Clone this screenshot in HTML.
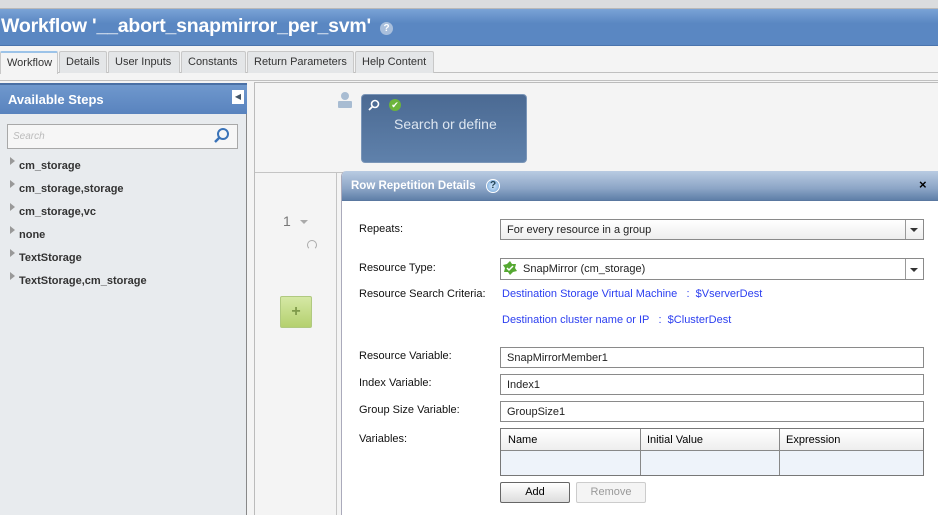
<!DOCTYPE html>
<html><head><style>
*{box-sizing:border-box;margin:0;padding:0}
body{width:938px;height:515px;overflow:hidden;background:#f4f4f4;font-family:"Liberation Sans",Tahoma,sans-serif;position:relative;font-size:12px;color:#000}
.abs{position:absolute}
.tab{position:absolute;top:51px;height:22px;border:1px solid #c8c8c8;border-bottom:none;background:#e4e6e8;font-size:11px;color:#333;padding:4px 6px 0;border-radius:2px 2px 0 0}
.lbl{position:absolute;left:359px;font-size:11px;color:#111}
.inp{position:absolute;left:500px;width:424px;height:21px;border:1px solid #8a8a8a;background:#fff;font-size:11px;padding:4px 6px;color:#222}
.tree{position:absolute;left:19px;font-size:11px;font-weight:bold;color:#333}
.tri{position:absolute;left:10px;width:0;height:0;border-left:5px solid #999;border-top:4px solid transparent;border-bottom:4px solid transparent}
.link{position:absolute;font-size:11px;color:#2b3ef0}
</style></head><body>
<div class="abs" style="left:0;top:0;width:938px;height:9px;background:#dadcde;border-bottom:1px solid #b8b8b8"></div>
<div class="abs" style="left:0;top:9px;width:938px;height:37px;background:linear-gradient(#7aa3d6,#5a87c2 40%,#5a87c2);border-bottom:1px solid #4a74ad"></div>
<div class="abs" style="left:1px;top:15px;font-size:19.5px;font-weight:bold;color:#fff;letter-spacing:-0.2px">Workflow '__abort_snapmirror_per_svm'</div>
<div class="abs" style="left:380px;top:22px;width:13px;height:13px;border-radius:50%;background:#a9bfdc;color:#fff;font-size:10px;font-weight:bold;text-align:center;line-height:13px">?</div>
<div class="abs" style="left:0;top:72px;width:938px;height:1px;background:#c0c0c0"></div>
<div class="tab" style="left:0;width:58px;background:#f4f4f4;height:23px;border-top:2px solid #9cc3e8">Workflow</div>
<div class="tab" style="left:59px;width:48px">Details</div>
<div class="tab" style="left:108px;width:72px">User Inputs</div>
<div class="tab" style="left:181px;width:65px">Constants</div>
<div class="tab" style="left:247px;width:107px">Return Parameters</div>
<div class="tab" style="left:355px;width:79px">Help Content</div>
<div class="abs" style="left:0;top:80px;width:938px;height:1px;background:#c0c0c0"></div>
<!-- left panel -->
<div class="abs" style="left:0;top:83px;width:247px;height:432px;background:#e8ebee;border-right:1px solid #888"></div>
<div class="abs" style="left:0;top:83px;width:247px;height:31px;background:linear-gradient(#6f98cd,#5983be);border-top:2px solid #4a70a5"></div>
<div class="abs" style="left:8px;top:92px;font-size:13px;font-weight:bold;color:#fff">Available Steps</div>
<div class="abs" style="left:232px;top:90px;width:12px;height:14px;background:#fff;color:#456;font-size:8px;text-align:center;line-height:14px">◀</div>
<div class="abs" style="left:7px;top:124px;width:231px;height:25px;border:1px solid #a8a8a8;background:#f6f6f6"></div>
<div class="abs" style="left:13px;top:131px;font-size:10px;font-style:italic;color:#bbb">Search</div>
<svg class="abs" style="left:213px;top:127px" width="18" height="18"><circle cx="10" cy="7" r="5" fill="none" stroke="#3a73b8" stroke-width="2"/><line x1="6.5" y1="10.5" x2="2" y2="15" stroke="#3a73b8" stroke-width="2.5"/></svg>
<div class="tri" style="top:157px"></div><div class="tree" style="top:160px">cm_storage</div>
<div class="tri" style="top:180px"></div><div class="tree" style="top:183px">cm_storage,storage</div>
<div class="tri" style="top:203px"></div><div class="tree" style="top:206px">cm_storage,vc</div>
<div class="tri" style="top:226px"></div><div class="tree" style="top:229px">none</div>
<div class="tri" style="top:249px"></div><div class="tree" style="top:252px">TextStorage</div>
<div class="tri" style="top:272px"></div><div class="tree" style="top:275px">TextStorage,cm_storage</div>
<!-- canvas -->
<div class="abs" style="left:254px;top:82px;width:684px;height:433px;background:#f4f4f4;border-left:1px solid #bbb;border-top:1px solid #bbb"></div>
<div class="abs" style="left:255px;top:172px;width:683px;height:1px;background:#c4c4c4"></div>
<div class="abs" style="left:336px;top:173px;width:1px;height:342px;background:#c4c4c4"></div>
<svg class="abs" style="left:337px;top:91px" width="16" height="18"><circle cx="8" cy="5" r="4" fill="#a8bcd2"/><rect x="1" y="10" width="14" height="7" rx="1" fill="#a8bcd2"/></svg>
<div class="abs" style="left:361px;top:94px;width:166px;height:69px;border-radius:4px;background:linear-gradient(#4b6a93,#5f81ab);border:1px solid #7b96b8"></div>
<svg class="abs" style="left:367px;top:99px" width="14" height="14"><circle cx="8" cy="5" r="3.5" fill="none" stroke="#fff" stroke-width="1.6"/><line x1="5.5" y1="7.5" x2="2" y2="11" stroke="#fff" stroke-width="1.8"/></svg>
<div class="abs" style="left:389px;top:99px;width:12px;height:12px;border-radius:50%;background:#6cb43c;color:#fff;font-size:9px;text-align:center;line-height:12px">✔</div>
<div class="abs" style="left:394px;top:116px;font-size:14px;color:#dde6f0">Search or define</div>
<div class="abs" style="left:283px;top:213px;font-size:14px;color:#777">1</div>
<div class="abs" style="left:300px;top:220px;border-top:4px solid #aaa;border-left:4px solid transparent;border-right:4px solid transparent"></div>
<div class="abs" style="left:307px;top:240px;width:10px;height:10px;border:1.5px solid #aaa;border-radius:50%;border-bottom-color:transparent"></div>
<div class="abs" style="left:280px;top:296px;width:32px;height:32px;background:linear-gradient(#d5e8a5,#b4d06e);border:1px solid #b0c980;border-radius:2px;color:#7f9a4a;font-size:16px;text-align:center;line-height:30px;font-weight:bold">+</div>
<!-- dialog -->
<div class="abs" style="left:341px;top:171px;width:597px;height:344px;background:#fff;border-left:1px solid #aab;border-radius:5px 0 0 0;overflow:hidden">
<div style="height:30px;background:linear-gradient(#b9cbe2,#8ca5c6 60%,#5f7fa8);border-bottom:1px solid #5a78a0"></div>
</div>
<div class="abs" style="left:351px;top:180px;font-size:11.5px;font-weight:bold;color:#fff">Row Repetition Details</div>
<div class="abs" style="left:486px;top:179px;width:14px;height:14px;border-radius:50%;background:radial-gradient(#d8ecff,#6a9fd4);border:1px solid #fff;color:#245;font-size:10px;font-weight:bold;text-align:center;line-height:12px">?</div>
<div class="abs" style="left:919px;top:177px;font-size:13px;font-weight:bold;color:#000">×</div>
<div class="lbl" style="top:223px">Repeats:</div>
<div class="inp" style="top:219px;height:21px;background:linear-gradient(#fff,#eee)">For every resource in a group</div>
<div class="abs" style="left:905px;top:220px;width:18px;height:19px;border-left:1px solid #999"></div>
<div class="abs" style="left:910px;top:228px;border-top:4px solid #333;border-left:4px solid transparent;border-right:4px solid transparent"></div>
<div class="lbl" style="top:262px">Resource Type:</div>
<div class="inp" style="top:258px;height:22px;padding-left:22px">SnapMirror (cm_storage)</div>
<svg class="abs" style="left:503px;top:261px" width="14" height="14"><polygon points="7,0 9,3 13,3 12,7 14,10 10,11 7,14 5,11 1,11 2,7 0,4 4,3" fill="#55a832"/><path d="M4 7l2 2 4-4" stroke="#fff" stroke-width="1.5" fill="none"/></svg>
<div class="abs" style="left:905px;top:259px;width:18px;height:20px;border-left:1px solid #999"></div>
<div class="abs" style="left:910px;top:268px;border-top:4px solid #333;border-left:4px solid transparent;border-right:4px solid transparent"></div>
<div class="lbl" style="top:288px">Resource Search Criteria:</div>
<div class="link" style="left:502px;top:288px">Destination Storage Virtual Machine&nbsp;&nbsp;&nbsp;:&nbsp;&nbsp;$VserverDest</div>
<div class="link" style="left:502px;top:314px">Destination cluster name or IP&nbsp;&nbsp;&nbsp;:&nbsp;&nbsp;$ClusterDest</div>
<div class="lbl" style="top:350px">Resource Variable:</div>
<div class="inp" style="top:347px">SnapMirrorMember1</div>
<div class="lbl" style="top:377px">Index Variable:</div>
<div class="inp" style="top:374px">Index1</div>
<div class="lbl" style="top:404px">Group Size Variable:</div>
<div class="inp" style="top:401px">GroupSize1</div>
<div class="lbl" style="top:433px">Variables:</div>
<div class="abs" style="left:500px;top:428px;width:424px;height:48px;border:1px solid #777;background:#eef3fa"></div>
<div class="abs" style="left:501px;top:429px;width:422px;height:22px;background:linear-gradient(#fff,#eee);border-bottom:1px solid #888"></div>
<div class="abs" style="left:640px;top:429px;width:1px;height:46px;background:#888"></div>
<div class="abs" style="left:779px;top:429px;width:1px;height:46px;background:#888"></div>
<div class="abs" style="left:508px;top:434px;font-size:11px">Name</div>
<div class="abs" style="left:647px;top:434px;font-size:11px">Initial Value</div>
<div class="abs" style="left:786px;top:434px;font-size:11px">Expression</div>
<div class="abs" style="left:500px;top:482px;width:70px;height:21px;border:1px solid #666;border-radius:2px;background:linear-gradient(#fff,#ddd);font-size:11px;text-align:center;line-height:19px">Add</div>
<div class="abs" style="left:576px;top:482px;width:70px;height:21px;border:1px solid #ccc;border-radius:2px;background:#f4f4f4;color:#999;font-size:11px;text-align:center;line-height:19px">Remove</div>
</body></html>
